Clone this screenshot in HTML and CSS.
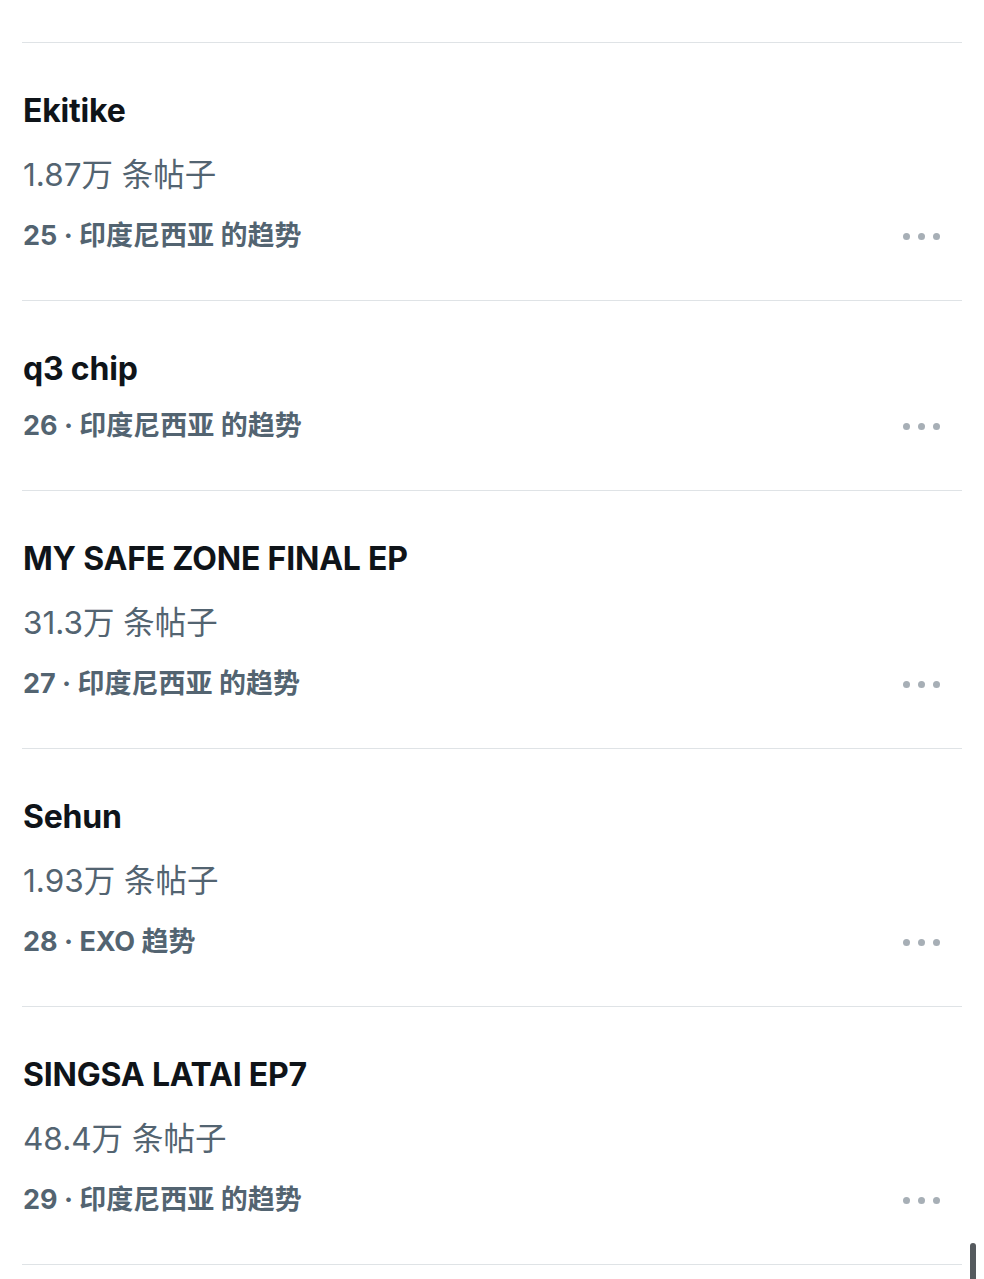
FILE: index.html
```html
<!DOCTYPE html>
<html lang="zh-CN">
<head>
<meta charset="utf-8">
<title>趋势</title>
<link rel="stylesheet" href="styles.css">
</head>
<body>
<div class="page">
  <ul class="trends">
    <li class="trend">
      <div class="title">Ekitike</div>
      <div class="count">1.87万 条帖子</div>
      <div class="meta"><span><span class="num">25</span> · 印度尼西亚 的趋势</span><span class="dots"><i></i><i></i><i></i></span></div>
    </li>
    <li class="trend">
      <div class="title">q3 chip</div>
      <div class="meta"><span><span class="num">26</span> · 印度尼西亚 的趋势</span><span class="dots"><i></i><i></i><i></i></span></div>
    </li>
    <li class="trend">
      <div class="title">MY SAFE ZONE FINAL EP</div>
      <div class="count">31.3万 条帖子</div>
      <div class="meta"><span><span class="num">27</span> · 印度尼西亚 的趋势</span><span class="dots"><i></i><i></i><i></i></span></div>
    </li>
    <li class="trend">
      <div class="title">Sehun</div>
      <div class="count">1.93万 条帖子</div>
      <div class="meta"><span><span class="num">28</span> · EXO 趋势</span><span class="dots"><i></i><i></i><i></i></span></div>
    </li>
    <li class="trend">
      <div class="title">SINGSA LATAI EP7</div>
      <div class="count">48.4万 条帖子</div>
      <div class="meta"><span><span class="num">29</span> · 印度尼西亚 的趋势</span><span class="dots"><i></i><i></i><i></i></span></div>
    </li>
  </ul>
  <div class="scrollbar"></div>
</div>
</body>
</html>
```
FILE: styles.css
```css
* { box-sizing: border-box; }
html, body { margin: 0; padding: 0; background: #ffffff; }
body {
  font-family: Inter, "Noto Sans CJK SC", "Noto Sans", sans-serif;
  color: #0f1419;
  height: 1279px;
  overflow: hidden;
}
.page { position: relative; height: 1279px; padding: 42px 22px 0; }
.trends { list-style: none; margin: 0; padding: 0; border-top: 1px solid #dfe3e6; }
.trend {
  border-bottom: 1px solid #dfe3e6;
  padding: 48px 0 48px 1px;
}
.title {
  font-size: 32px;
  line-height: 40px;
  font-weight: 700;
  color: #0f1419;
  letter-spacing: -0.2px;
}
.count {
  margin-top: 24px;
  font-size: 31.5px;
  line-height: 40px;
  font-weight: 400;
  color: #536471;
}
.meta {
  margin-top: 21px;
  display: flex;
  justify-content: space-between;
  align-items: center;
  font-size: 27px;
  line-height: 32px;
  font-weight: 700;
  color: #536471;
}
.count + .meta { margin-top: 25px; }
.dots { display: flex; gap: 8px; margin-right: 22px; }
.dots i { display: block; width: 7px; height: 7px; border-radius: 50%; background: #a7afb6; }
.scrollbar {
  position: absolute;
  right: 8px;
  top: 1243px;
  width: 6px;
  height: 60px;
  border-radius: 3px;
  background: #555a5e;
}
```
